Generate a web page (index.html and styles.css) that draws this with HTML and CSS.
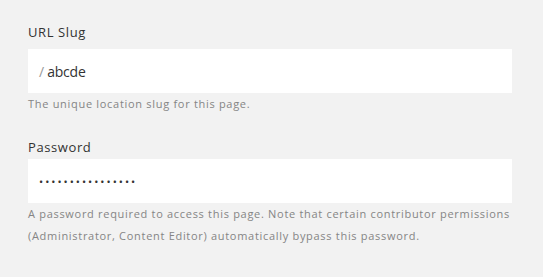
FILE: index.html
```html
<!DOCTYPE html>
<html lang="en">
<head>
<meta charset="utf-8">
<title>Page Settings</title>
<link rel="stylesheet" href="styles.css">
</head>
<body>
<div class="panel">
  <div class="field field-slug">
    <div class="label">URL Slug</div>
    <div class="input"><span class="prefix">/</span><span class="value">abcde</span></div>
    <div class="help">The unique location slug for this page.</div>
  </div>
  <div class="field field-password">
    <div class="label">Password</div>
    <div class="input"><span class="dots">••••••••••••••••</span></div>
    <div class="help">A password required to access this page. Note that certain contributor permissions (Administrator, Content Editor) automatically bypass this password.</div>
  </div>
</div>
</body>
</html>
```
FILE: styles.css
```css
html, body {
  margin: 0;
  padding: 0;
  background: #f2f2f2;
}
body {
  font-family: "Open Sans", "Liberation Sans", sans-serif;
  color: #333;
}
.panel {
  padding: 24px 31px 0 28px;
  display: flex;
  flex-direction: column;
}
.field {
  display: flex;
  flex-direction: column;
}
.field-password {
  margin-top: 24px;
}
.label {
  font-size: 13px;
  line-height: 16px;
  letter-spacing: 0.6px;
  color: #333;
  margin-bottom: 9px;
}
.field-password .label {
  margin-bottom: 4px;
}
.input {
  background: #fff;
  height: 44px;
  display: flex;
  align-items: center;
  padding-left: 11px;
  font-size: 14px;
}
.prefix {
  color: #999;
  margin-right: 3px;
}
.value {
  color: #333;
  letter-spacing: -0.2px;
}
.dots {
  font-size: 11px;
  letter-spacing: 2px;
  color: #333;
}
.help {
  font-size: 11px;
  line-height: 22px;
  letter-spacing: 0.7px;
  color: #858585;
}
```
